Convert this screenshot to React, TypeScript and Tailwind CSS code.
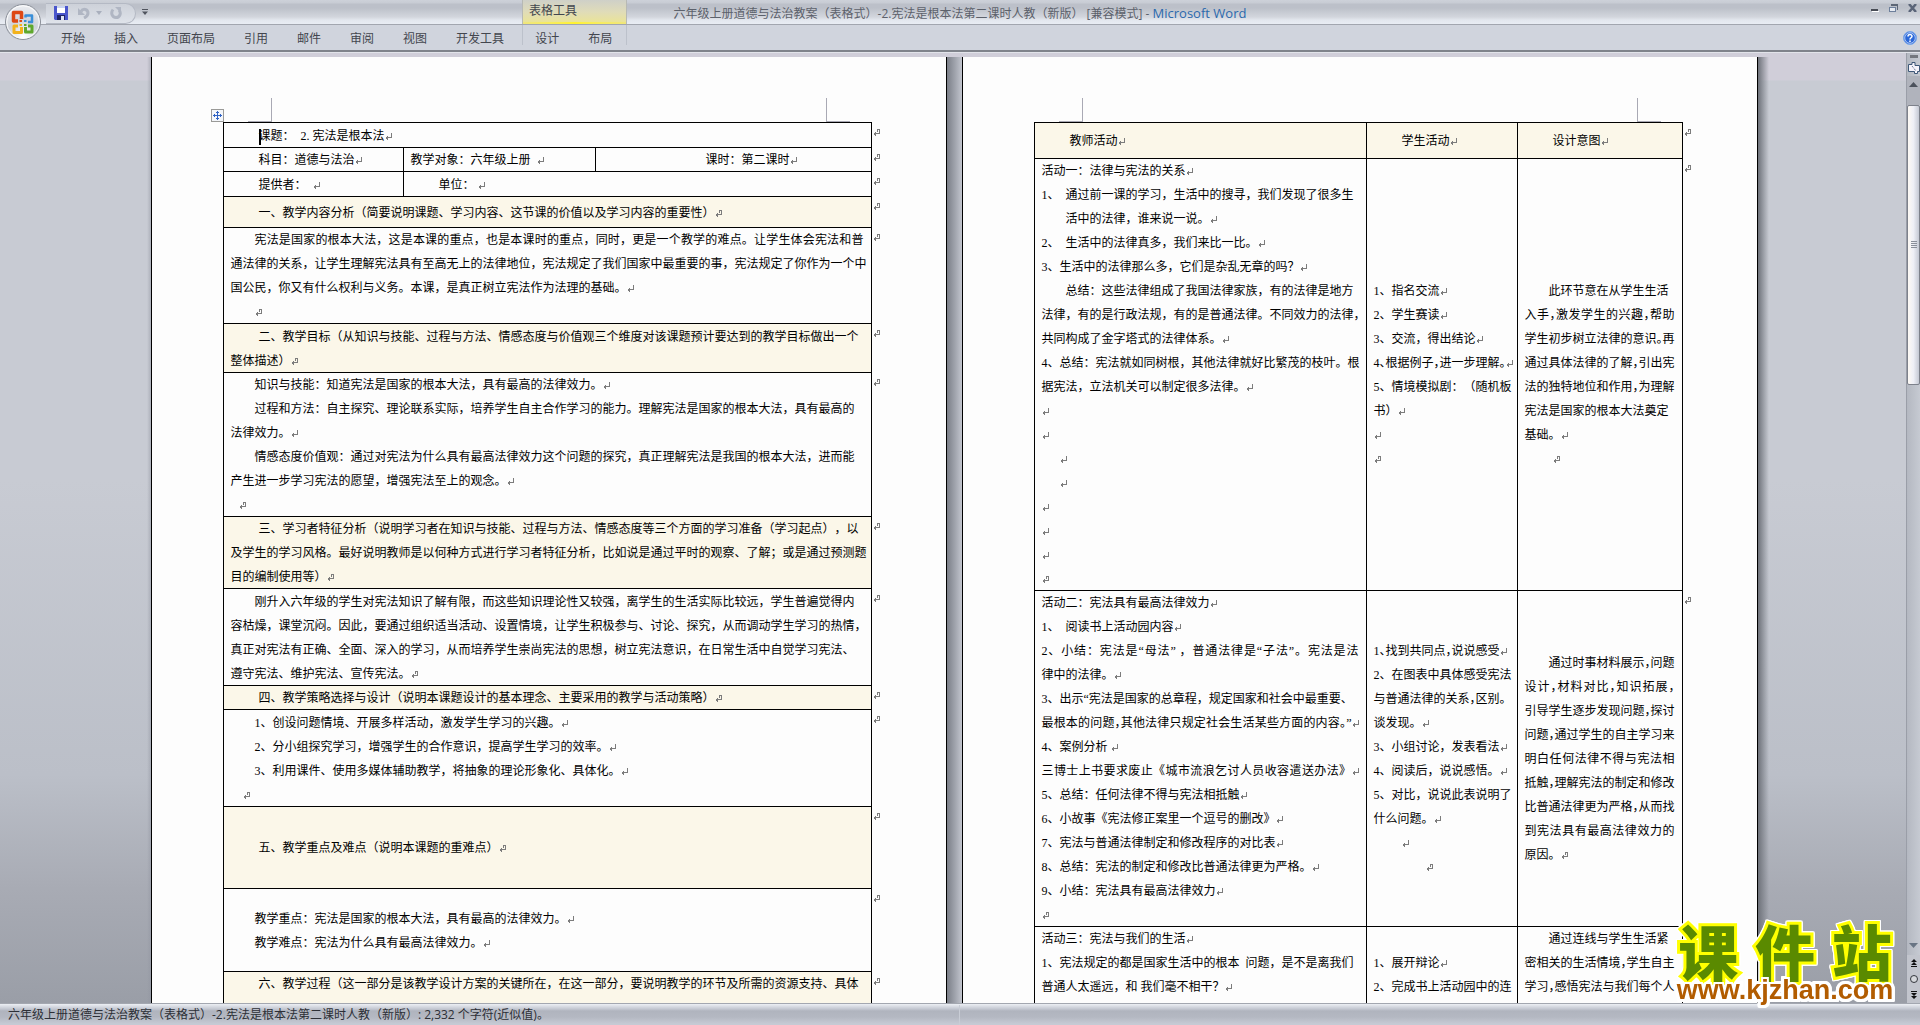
import type { ReactNode } from 'react'
import clsx from 'clsx'

const TABS = ['开始', '插入', '页面布局', '引用', '邮件', '审阅', '视图', '开发工具']
const TABLE_TABS = ['设计', '布局']
const DOC_NAME = '六年级上册道德与法治教案（表格式）-2.宪法是根本法第二课时人教（新版）'

// Paragraph mark; the `cell` variant has the hook that closes a table cell
function Mark({ cell }: { cell?: boolean }) {
  return (
    <svg className="inline-block h-[7px] w-[7px] align-baseline" viewBox="0 0 7 7" fill="none" stroke="#7c7c7c" shapeRendering="crispEdges">
      <path d={cell ? 'M4 .5h2.5v4H1M4.5 .5v2M.5 4.5h1M2.5 2.5v4M1.5 3.5v2' : 'M6.5 0v4.5H1M.5 4.5h1M2.5 2.5v4M1.5 3.5v2'} />
    </svg>
  )
}

interface LineProps {
  children?: ReactNode
  indent?: string
  mark?: 'p' | 'cell'
  justify?: boolean
  tight?: boolean
}

function Line({ children, indent, mark, justify, tight }: LineProps) {
  return (
    <p
      className={clsx(
        'h-6 whitespace-pre',
        indent,
        justify && 'text-justify [text-align-last:justify] whitespace-normal',
        tight && "[font-feature-settings:'halt']"
      )}
    >
      {children}
      {mark && <Mark cell={mark === 'cell'} />}
    </p>
  )
}

interface CellProps {
  children?: ReactNode
  span?: number
  tint?: boolean
  top?: boolean
}

function Cell({ children, span, tint, top }: CellProps) {
  return (
    <td
      colSpan={span}
      className={clsx('pr-[7px] pl-2 shadow-[inset_1px_1px_0_#000]', tint && 'bg-[#fbf7e9]', top ? 'align-top' : 'align-middle')}
    >
      {children}
    </td>
  )
}

function Row({ children, height }: { children: ReactNode; height: string }) {
  return (
    <tr className={height}>
      {children}
      <td className="pt-[7px] pl-0.5 align-top leading-none shadow-[inset_1px_0_0_#000]">
        <div className="flex"><Mark cell /></div>
      </td>
    </tr>
  )
}

function Page({ children, handle }: { children: ReactNode; handle?: boolean }) {
  return (
    <section className="w-[796px] shrink-0 border-x border-black bg-[#fdfdfd]">
      <div className="flex h-[65px] items-end pl-[59px]">
        <span className="h-[13px] w-[13px]">
          {handle && (
            <svg viewBox="0 0 13 13" className="h-[13px] w-[13px]" fill="none">
              <rect x=".5" y=".5" width="12" height="12" fill="#f4f6fa" stroke="#9a9a98" />
              <path d="M6.5 2v9M2 6.5h9M5 3.5h3M5 9.5h3M3.5 5v3M9.5 5v3" stroke="#2f62c4" shapeRendering="crispEdges" />
            </svg>
          )}
        </span>
        <span className="ml-6 h-6 w-6 border-r border-b border-[#a9a9b4]" />
        <span className="mr-24 ml-auto h-6 w-6 border-b border-l border-[#a9a9b4]" />
      </div>
      <div className="pl-[71px]">{children}</div>
    </section>
  )
}

function PlanTable() {
  return (
    <table className="w-[660px] table-fixed border-separate border-spacing-0">
      <colgroup>
        <col className="w-[180px]" />
        <col className="w-[192px]" />
        <col className="w-[276px]" />
        <col className="w-3" />
      </colgroup>
      <tbody>
        <Row height="h-[25px]">
          <Cell span={3}>
            <Line indent="pl-7" mark="p">
              <span className="-mr-0.5 inline-block h-4 w-0.5 bg-black align-middle" />
              课题：  2. 宪法是根本法
            </Line>
          </Cell>
        </Row>
        <Row height="h-6">
          <Cell><Line indent="pl-7" mark="p">科目：道德与法治</Line></Cell>
          <Cell><Line mark="p">教学对象：六年级上册  </Line></Cell>
          <Cell><Line indent="pl-[103px]" mark="p">课时：第二课时</Line></Cell>
        </Row>
        <Row height="h-[25px]">
          <Cell><Line indent="pl-7" mark="p">提供者：  </Line></Cell>
          <Cell span={2}><Line indent="pl-7" mark="p">单位： </Line></Cell>
        </Row>
        <Row height="h-[31px]">
          <Cell span={3} tint>
            <Line indent="pl-7" mark="cell">一、教学内容分析（简要说明课题、学习内容、这节课的价值以及学习内容的重要性）</Line>
          </Cell>
        </Row>
        <Row height="h-24">
          <Cell span={3}>
            <Line indent="pl-6" justify>宪法是国家的根本大法，这是本课的重点，也是本课时的重点，同时，更是一个教学的难点。让学生体会宪法和普</Line>
            <Line justify>通法律的关系，让学生理解宪法具有至高无上的法律地位，宪法规定了我们国家中最重要的事，宪法规定了你作为一个中</Line>
            <Line mark="p">国公民，你又有什么权利与义务。本课，是真正树立宪法作为法理的基础。</Line>
            <Line indent="pl-6" mark="cell" />
          </Cell>
        </Row>
        <Row height="h-[49px]">
          <Cell span={3} tint>
            <Line indent="pl-7">二、教学目标（从知识与技能、过程与方法、情感态度与价值观三个维度对该课题预计要达到的教学目标做出一个</Line>
            <Line mark="cell">整体描述）</Line>
          </Cell>
        </Row>
        <Row height="h-36">
          <Cell span={3}>
            <Line indent="pl-6" mark="p">知识与技能：知道宪法是国家的根本大法，具有最高的法律效力。</Line>
            <Line indent="pl-6">过程和方法：自主探究、理论联系实际，培养学生自主合作学习的能力。理解宪法是国家的根本大法，具有最高的</Line>
            <Line mark="p">法律效力。</Line>
            <Line indent="pl-6">情感态度价值观：通过对宪法为什么具有最高法律效力这个问题的探究，真正理解宪法是我国的根本大法，进而能</Line>
            <Line mark="p">产生进一步学习宪法的愿望，增强宪法至上的观念。</Line>
            <Line indent="pl-2" mark="cell" />
          </Cell>
        </Row>
        <Row height="h-18">
          <Cell span={3} tint>
            <Line indent="pl-7">三、学习者特征分析（说明学习者在知识与技能、过程与方法、情感态度等三个方面的学习准备（学习起点），以</Line>
            <Line justify>及学生的学习风格。最好说明教师是以何种方式进行学习者特征分析，比如说是通过平时的观察、了解；或是通过预测题</Line>
            <Line mark="cell">目的编制使用等）</Line>
          </Cell>
        </Row>
        <Row height="h-[97px]">
          <Cell span={3}>
            <Line indent="pl-6">刚升入六年级的学生对宪法知识了解有限，而这些知识理论性又较强，离学生的生活实际比较远，学生普遍觉得内</Line>
            <Line>容枯燥，课堂沉闷。因此，要通过组织适当活动、设置情境，让学生积极参与、讨论、探究，从而调动学生学习的热情，</Line>
            <Line>真正对宪法有正确、全面、深入的学习，从而培养学生崇尚宪法的思想，树立宪法意识，在日常生活中自觉学习宪法、</Line>
            <Line mark="cell">遵守宪法、维护宪法、宣传宪法。</Line>
          </Cell>
        </Row>
        <Row height="h-6">
          <Cell span={3} tint>
            <Line indent="pl-7" mark="cell">四、教学策略选择与设计（说明本课题设计的基本理念、主要采用的教学与活动策略）</Line>
          </Cell>
        </Row>
        <Row height="h-[97px]">
          <Cell span={3}>
            <Line indent="pl-6" mark="p">1、创设问题情境、开展多样活动，激发学生学习的兴趣。</Line>
            <Line indent="pl-6" mark="p">2、分小组探究学习，增强学生的合作意识，提高学生学习的效率。</Line>
            <Line indent="pl-6" mark="p">3、利用课件、使用多媒体辅助教学，将抽象的理论形象化、具体化。</Line>
            <Line indent="pl-3" mark="cell" />
          </Cell>
        </Row>
        <Row height="h-[82px]">
          <Cell span={3} tint>
            <Line indent="pl-7" mark="cell">五、教学重点及难点（说明本课题的重难点）</Line>
          </Cell>
        </Row>
        <Row height="h-[83px]">
          <Cell span={3}>
            <Line indent="pl-6" mark="p">教学重点：宪法是国家的根本大法，具有最高的法律效力。</Line>
            <Line indent="pl-6" mark="p">教学难点：宪法为什么具有最高法律效力。</Line>
          </Cell>
        </Row>
        <Row height="h-[49px]">
          <Cell span={3} tint top>
            <Line indent="pl-7">六、教学过程（这一部分是该教学设计方案的关键所在，在这一部分，要说明教学的环节及所需的资源支持、具体</Line>
          </Cell>
        </Row>
      </tbody>
    </table>
  )
}

function ActivityTable() {
  return (
    <table className="w-[660px] table-fixed border-separate border-spacing-0">
      <colgroup>
        <col className="w-[332px]" />
        <col className="w-[151px]" />
        <col className="w-[165px]" />
        <col className="w-3" />
      </colgroup>
      <tbody>
        <Row height="h-9">
          <Cell tint><Line indent="pl-7" mark="p">教师活动</Line></Cell>
          <Cell tint><Line indent="pl-7" mark="p">学生活动</Line></Cell>
          <Cell tint><Line indent="pl-7" mark="p">设计意图</Line></Cell>
        </Row>
        <Row height="h-[431px]">
          <Cell top>
            <Line mark="p">活动一：法律与宪法的关系</Line>
            <Line>1、  通过前一课的学习，生活中的搜寻，我们发现了很多生</Line>
            <Line indent="pl-6" mark="p">活中的法律，谁来说一说。</Line>
            <Line mark="p">2、  生活中的法律真多，我们来比一比。</Line>
            <Line mark="p">3、生活中的法律那么多，它们是杂乱无章的吗？</Line>
            <Line indent="pl-6">总结：这些法律组成了我国法律家族，有的法律是地方</Line>
            <Line>法律，有的是行政法规，有的是普通法律。不同效力的法律，</Line>
            <Line mark="p">共同构成了金字塔式的法律体系。</Line>
            <Line>4、总结：宪法就如同树根，其他法律就好比繁茂的枝叶。根</Line>
            <Line mark="p">据宪法，立法机关可以制定很多法律。</Line>
            <Line mark="p" />
            <Line mark="p" />
            <Line indent="pl-[18px]" mark="p" />
            <Line indent="pl-[18px]" mark="p" />
            <Line mark="p" />
            <Line mark="p" />
            <Line mark="p" />
            <Line mark="cell" />
          </Cell>
          <Cell>
            <Line mark="p">1、指名交流</Line>
            <Line mark="p">2、学生赛读</Line>
            <Line mark="p">3、交流，得出结论</Line>
            <Line mark="p" tight>4、根据例子，进一步理解。</Line>
            <Line>5、情境模拟剧：（随机板</Line>
            <Line mark="p">书）</Line>
            <Line mark="p" />
            <Line mark="cell" />
          </Cell>
          <Cell>
            <Line indent="pl-6">此环节意在从学生生活</Line>
            <Line justify tight>入手，激发学生的兴趣，帮助</Line>
            <Line justify tight>学生初步树立法律的意识。再</Line>
            <Line justify tight>通过具体法律的了解，引出宪</Line>
            <Line justify tight>法的独特地位和作用，为理解</Line>
            <Line>宪法是国家的根本大法奠定</Line>
            <Line mark="p">基础。</Line>
            <Line indent="pl-7" mark="cell" />
          </Cell>
        </Row>
        <Row height="h-[336px]">
          <Cell top>
            <Line mark="p">活动二：宪法具有最高法律效力</Line>
            <Line mark="p">1、  阅读书上活动园内容</Line>
            <Line justify>2、小结：宪法是“母法” ，普通法律是“子法”。宪法是法</Line>
            <Line mark="p">律中的法律。</Line>
            <Line>3、出示“宪法是国家的总章程，规定国家和社会中最重要、</Line>
            <Line justify tight mark="p">最根本的问题，其他法律只规定社会生活某些方面的内容。”</Line>
            <Line mark="p">4、案例分析 </Line>
            <Line justify mark="p">三博士上书要求废止《城市流浪乞讨人员收容遣送办法》</Line>
            <Line mark="p">5、总结：任何法律不得与宪法相抵触</Line>
            <Line mark="p">6、小故事《宪法修正案里一个逗号的删改》</Line>
            <Line mark="p">7、宪法与普通法律制定和修改程序的对比表</Line>
            <Line mark="p">8、总结：宪法的制定和修改比普通法律更为严格。</Line>
            <Line mark="p">9、小结：宪法具有最高法律效力</Line>
            <Line mark="cell" />
          </Cell>
          <Cell>
            <Line mark="p" tight>1、找到共同点，说说感受</Line>
            <Line>2、在图表中具体感受宪法</Line>
            <Line tight>与普通法律的关系，区别。</Line>
            <Line mark="p">谈发现。</Line>
            <Line mark="p">3、小组讨论，发表看法</Line>
            <Line mark="p">4、阅读后，说说感悟。</Line>
            <Line>5、对比，说说此表说明了</Line>
            <Line mark="p">什么问题。</Line>
            <Line indent="pl-7" mark="p" />
            <Line indent="pl-13" mark="cell" />
          </Cell>
          <Cell>
            <Line indent="pl-6" justify tight>通过时事材料展示，问题</Line>
            <Line justify tight>设计，材料对比，知识拓展，</Line>
            <Line justify tight>引导学生逐步发现问题，探讨</Line>
            <Line justify tight>问题，通过学生的自主学习来</Line>
            <Line justify>明白任何法律不得与宪法相</Line>
            <Line justify tight>抵触，理解宪法的制定和修改</Line>
            <Line justify tight>比普通法律更为严格，从而找</Line>
            <Line justify>到宪法具有最高法律效力的</Line>
            <Line mark="cell">原因。</Line>
          </Cell>
        </Row>
        <Row height="h-24">
          <Cell top>
            <Line mark="p">活动三：宪法与我们的生活</Line>
            <Line>1、宪法规定的都是国家生活中的根本  问题，是不是离我们</Line>
            <Line mark="p">普通人太遥远，和 我们毫不相干？</Line>
          </Cell>
          <Cell top>
            <Line />
            <Line mark="p">1、展开辩论</Line>
            <Line>2、完成书上活动园中的连</Line>
          </Cell>
          <Cell top>
            <Line indent="pl-6">通过连线与学生生活紧</Line>
            <Line justify tight>密相关的生活情境，学生自主</Line>
            <Line justify tight>学习，感悟宪法与我们每个人</Line>
          </Cell>
        </Row>
      </tbody>
    </table>
  )
}

function OfficeButton() {
  return (
    <button aria-label="Office" className="absolute top-[3px] left-1 z-10">
      <svg viewBox="0 0 38 38" className="h-[38px] w-[38px]" fill="none">
        <defs>
          <radialGradient id="orb" cx=".5" cy=".9" r=".9">
            <stop offset="0" stopColor="#ffffff" />
            <stop offset=".5" stopColor="#cfd3da" />
            <stop offset="1" stopColor="#eef0f4" />
          </radialGradient>
        </defs>
        <circle cx="19" cy="19" r="17.5" fill="url(#orb)" stroke="#8b9099" />
        <circle cx="19" cy="19" r="16.3" stroke="#fff" strokeOpacity=".8" />
        <g strokeWidth="3.500" strokeLinejoin="round">
          <path d="M17.500 16V9.500H9.500V18H14" stroke="#dd4814" />
          <path d="M21.500 14.500v-2H28V19h-4" stroke="#3a8fd8" strokeWidth="2.500" />
          <path d="M17.500 24v5.500H10V23h4" stroke="#f2b21c" strokeWidth="3" />
          <path d="M21.500 24v5H28v-6h-4" stroke="#5fa82c" strokeWidth="3" />
        </g>
        <path d="M15.500 17h2.500v2h-2.500z" fill="#dd4814" />
        <path d="M20 17h2.500v2H20z" fill="#3a8fd8" />
        <path d="M15.500 21H18v2h-2.500z" fill="#f2b21c" />
        <path d="M20 21h2.500v2H20z" fill="#5fa82c" />
      </svg>
    </button>
  )
}

function QuickAccess() {
  return (
    <div className="flex items-center">
      <div className="mt-0.5 ml-[46px] flex h-[21px] w-[90px] items-center rounded-r-full border border-l-0 border-[#b4b9c4] bg-gradient-to-b from-[#cdd1d9] to-[#dfe3ea]">
        <button aria-label="保存" className="ml-2">
          <svg viewBox="0 0 14 14" className="h-3.5 w-3.5">
            <path d="M0 0h14v14H1L0 13z" fill="#4a56cc" />
            <path d="M3 0h8v7H3z" fill="#fff" />
            <path d="M3 0h8v2H3z" fill="#c9d4ee" />
            <path d="M3 9h8v5H3z" fill="#1d2468" />
            <path d="M7 10h3v4H7z" fill="#dfe4f4" />
          </svg>
        </button>
        <button aria-label="撤消" className="ml-2.5">
          <svg viewBox="0 0 12 12" className="h-3 w-3" fill="none" stroke="#b0b6c3" strokeWidth="3">
            <path d="M3 4.500C5 1 10 2 10 6c0 3-2 4-4 5" />
            <path d="M0 1v7h7z" fill="#b0b6c3" stroke="none" />
          </svg>
        </button>
        <button aria-label="撤消列表" className="ml-1.5">
          <svg viewBox="0 0 6 4" className="h-1 w-1.5"><path d="M0 0h6L3 4z" fill="#a9afbd" /></svg>
        </button>
        <button aria-label="恢复" className="ml-2">
          <svg viewBox="0 0 12 12" className="h-3 w-3" fill="none" stroke="#b0b6c3" strokeWidth="3">
            <path d="M3 2.500C.5 6 2 10.500 6 10.500S11.500 6 9 3" />
            <path d="M5 0h6v6z" fill="#b0b6c3" stroke="none" />
          </svg>
        </button>
      </div>
      <button aria-label="自定义快速访问工具栏" className="ml-1.5">
        <svg viewBox="0 0 6 6" className="h-1.5 w-1.5"><path d="M0 0h6v1H0zM0 2.500h6L3 6z" fill="#50545e" /></svg>
      </button>
    </div>
  )
}

function TitleBar() {
  return (
    <header className="relative flex h-6 bg-[linear-gradient(#cdd1d9_0,#c8ccd4_3px,#bcc0c9_4px,#bcc0c9_8px,#c6cad2_12px,#d3d6dd_17px,#e3e7ee_20px,#e9edf4_24px)]">
      <QuickAccess />
      <div className="absolute left-[522px] flex h-6 w-[105px] flex-col justify-between border-x border-[#b7b9b4] bg-gradient-to-b from-[#cfd0c8] via-[#e0dcb8] to-[#ece590]">
        <span className="pl-1.5 text-xs leading-[22px] text-[#43464e]">表格工具</span>
        <span className="h-0.5 bg-gradient-to-r from-[#efe67c] via-[#fff22e] to-[#efe67c]" />
      </div>
      <h1 className="absolute inset-x-0 text-center text-xs leading-[26px] text-[#5c616b]">
        {DOC_NAME} [兼容模式]{' - '}
        <span className="text-[13px] text-[#2b69ad]">Microsoft Word</span>
      </h1>
      <div className="relative z-10 ml-auto flex gap-2.5 pt-1 pr-[3px]">
        <button aria-label="最小化" className="flex h-2 w-2 items-end">
          <svg viewBox="0 0 8 4" className="h-1 w-2"><path d="M0 1h7v2H0z" fill="#484c55" /><path d="M1 3h7v1H1z" fill="#fff" /></svg>
        </button>
        <button aria-label="还原" className="h-2">
          <svg viewBox="0 0 9 8" className="h-2 w-[9px]" fill="none" shapeRendering="crispEdges">
            <path d="M2 1h7v5" stroke="#5d6675" strokeWidth="2" />
            <path d="M.5 3.500h6v4h-6z" fill="#e6eaf1" stroke="#6d7f9b" />
          </svg>
        </button>
        <button aria-label="关闭" className="h-2">
          <svg viewBox="0 0 9 8" className="h-2 w-[9px]" stroke="#5a6478" strokeWidth="2.500"><path d="M1 0l7 8M8 0L1 8" /></svg>
        </button>
      </div>
    </header>
  )
}

function Ribbon() {
  return (
    <nav className="flex h-7 shrink-0 items-start border-t border-b-2 border-t-[#a2a6af] border-b-[#7f838b] bg-[#d0d4dd] pl-[61px] text-xs text-[#43464e]">
      <div className="flex gap-[29px]">
        {TABS.map(tab => (
          <button key={tab} className="leading-7">{tab}</button>
        ))}
      </div>
      <div className="ml-[18px] flex h-5 w-[105px] gap-[29px] border-x border-[#bcc1cb] pl-3">
        {TABLE_TABS.map(tab => (
          <button key={tab} className="leading-7">{tab}</button>
        ))}
      </div>
      <button aria-label="帮助" className="mt-1.5 mr-[3px] ml-auto">
        <svg viewBox="0 0 14 14" className="h-3.5 w-3.5" fill="none">
          <circle cx="7" cy="7" r="6.500" fill="#2c68d8" stroke="#7aa6e8" />
          <circle cx="7" cy="7" r="5.300" stroke="#cfe0fb" strokeWidth=".8" />
          <path d="M5 5.500C5 3 9 3 9 5.300 9 6.800 7 6.800 7 8.500M7 9.500v1.500" stroke="#fff" strokeWidth="1.500" />
        </svg>
      </button>
    </nav>
  )
}

function ScrollBar() {
  return (
    <div className="flex w-3.5 shrink-0 flex-col items-center border-l border-[#9a9ea8] bg-gradient-to-r from-[#b4b8c1] to-[#c6cad2]">
      <span className="my-[2px] h-[3px] w-2 bg-[#74777e]" />
      <button aria-label="标尺" className="flex h-4 items-center">
        <svg viewBox="0 0 12 12" className="h-3 w-3" fill="#f6f3fa" stroke="#3f5878">
          <path d="M1 2.500h3v-2h3v3h4.500v6h-2v2h-3v-2H.5v-7z" />
          <path d="M4 4l4 5" strokeDasharray="1 1" />
        </svg>
      </button>
      <button aria-label="向上" className="flex h-[29px] w-full justify-center bg-[#b0b3bc] pt-1.5">
        <svg viewBox="0 0 9 5" className="h-[5px] w-[9px]"><path d="M0 5h9L4.500 0z" fill="#4c525c" /></svg>
      </button>
      <div className="flex h-[280px] w-full items-center justify-center rounded-xs border border-[#7d818b] bg-gradient-to-r from-[#fdf9f4] via-[#eeeff6] to-[#c5c9d4]">
        <svg viewBox="0 0 6 8" className="h-2 w-1.5" stroke="#8a8f9a"><path d="M0 .5h6M0 2.500h6M0 4.500h6M0 6.500h6" /></svg>
      </div>
      <button aria-label="向下" className="mt-auto mb-1 h-3">
        <svg viewBox="0 0 9 5" className="h-[5px] w-[9px]"><path d="M0 0h9L4.500 5z" fill="#697584" /></svg>
      </button>
      <div className="flex h-12 w-full flex-col items-center justify-between bg-[#c2c5cd] py-1">
        <button aria-label="前一页" className="flex">
          <svg viewBox="0 0 6 8" className="h-2 w-1.5"><path d="M3 0l3 3H0zM3 3l3 3H0zM0 7h6v1H0z" fill="#111" /></svg>
        </button>
        <button aria-label="选择浏览对象" className="flex">
          <svg viewBox="0 0 8 8" className="h-2 w-2"><circle cx="4" cy="4" r="3.500" fill="#d6d8dc" stroke="#33363c" /></svg>
        </button>
        <button aria-label="下一页" className="flex">
          <svg viewBox="0 0 6 8" className="h-2 w-1.5"><path d="M0 0h6v1H0zM0 2h6L3 5zM0 5h6L3 8z" fill="#111" /></svg>
        </button>
      </div>
    </div>
  )
}

function SiteLogo() {
  return (
    <div className="absolute right-[20px] bottom-[25px] w-[230px] [filter:drop-shadow(1px_0_0_#fff)_drop-shadow(-1px_0_0_#fff)_drop-shadow(0_1px_0_#fff)_drop-shadow(0_-1px_0_#fff)]">
      <div className="flex justify-around text-6xl leading-[54px] font-black text-[#5a8a00] [-webkit-text-stroke:6px_#ffff00] [paint-order:stroke_fill]">
        <span>课</span>
        <span>件</span>
        <span>站</span>
      </div>
      <a href="#" className="block text-center font-['Liberation_Sans',sans-serif] text-[27px] leading-5 font-bold text-[#b25c00] [-webkit-text-stroke:4px_#fff] [paint-order:stroke_fill]">
        www.kjzhan.com
      </a>
    </div>
  )
}

export default function App() {
  return (
    <div className="relative flex h-screen flex-col overflow-hidden bg-[#d0d4dd] font-['Open_Sans','Noto_Sans_CJK_SC',sans-serif] [text-spacing-trim:space-all]">
      <TitleBar />
      <OfficeButton />
      <Ribbon />
      <div className="flex min-h-0 flex-1 border-t border-[#e2e4ea] bg-[linear-gradient(#d0ced9_0,#d0ced9_27px,#c8cbd3_28px,#c8cbd3_45%,#bbbfc8_76%,#a8abb4_88%,#9a9ea7_100%)]">
        <main className="flex min-w-0 flex-1 justify-center overflow-hidden pt-1 pl-[9px] font-['Liberation_Serif','Noto_Sans_CJK_SC',serif] text-xs leading-[27px] text-black">
          <div className="w-1 shrink-0 bg-gradient-to-r from-transparent to-[#9094a0]/50" />
          <Page handle><PlanTable /></Page>
          <div className="w-[15px] shrink-0 bg-gradient-to-r from-[#7b7f88] to-[#c2c5ce]" />
          <Page><ActivityTable /></Page>
          <div className="w-[11px] shrink-0 bg-gradient-to-r from-[#6e727a] to-transparent" />
        </main>
        <ScrollBar />
      </div>
      <footer className="flex h-[22px] shrink-0 items-center border-t border-[#a3a7b0] bg-[linear-gradient(#eceff4_0,#c3c7d1_5px,#b0b4be_7px,#b4b8c2_13px,#c6cad4_20px)] text-xs leading-5 text-[#2c2f36]">
        <span className="w-1/2 border-r border-[#c9cdd6] pl-2">
          {DOC_NAME}: 2,332 个字符(近似值)。
        </span>
      </footer>
      <SiteLogo />
    </div>
  )
}
